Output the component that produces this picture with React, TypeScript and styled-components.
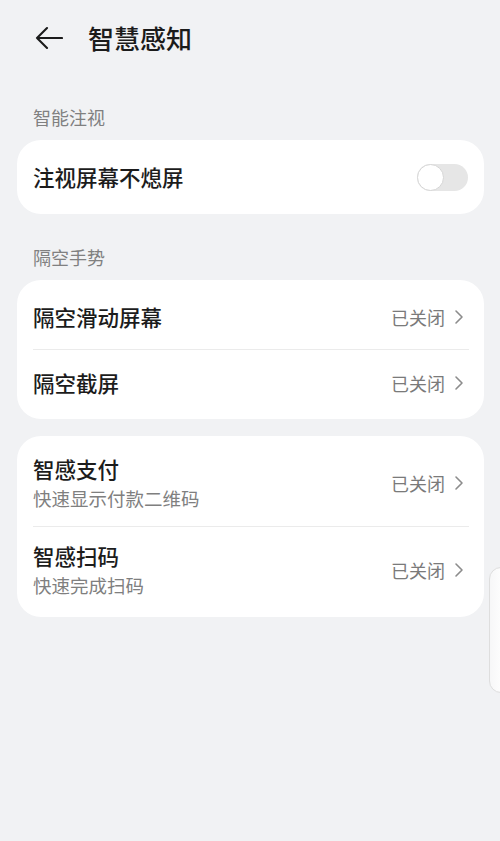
import React from "react"
import styled, { createGlobalStyle } from "styled-components"

const GlobalStyle = createGlobalStyle`
  html, body {
    margin: 0;
    padding: 0;
    background: #f1f2f4;
  }
  body {
    font-family: "Noto Sans CJK SC", "Noto Sans", sans-serif;
    -webkit-font-smoothing: antialiased;
  }
`

const Page = styled.div`
  position: relative;
  width: 500px;
  min-height: 841px;
  background: #f1f2f4;
  overflow: hidden;
`

const Header = styled.div`
  height: 76px;
  display: flex;
  align-items: center;
  padding-left: 35px;
  gap: 25px;
`

const BackButton = styled.button`
  width: 28px;
  height: 24px;
  padding: 0;
  border: none;
  background: none;
  display: flex;
  align-items: center;
  justify-content: center;
  color: #1b1b1b;
`

const PageTitle = styled.h1`
  margin: 0;
  font-size: 26px;
  line-height: 34px;
  font-weight: 500;
  color: #1b1b1b;
`

const SectionLabel = styled.div<{ $top: number }>`
  margin: ${(p) => p.$top}px 0 11px 33px;
  font-size: 18px;
  line-height: 24px;
  color: #808080;
`

const Card = styled.div<{ $gap?: number }>`
  margin: ${(p) => p.$gap ?? 0}px 16px 0 17px;
  background: #ffffff;
  border-radius: 24px;
  padding: 4px 0;
`

const Row = styled.div<{ $height: number }>`
  height: ${(p) => p.$height}px;
  display: flex;
  align-items: center;
  padding: 0 16px;
`

const Divider = styled.div`
  margin: 0 15px 0 16px;
  height: 1px;
  background: #ebebeb;
`

const TextBlock = styled.div`
  flex: 1;
  display: flex;
  flex-direction: column;
`

const RowTitle = styled.div`
  font-size: 21.5px;
  line-height: 30px;
  font-weight: 500;
  color: #1c1c1c;
`

const RowSub = styled.div`
  font-size: 18.5px;
  line-height: 28px;
  color: #7f7f7f;
`

const Status = styled.div`
  display: flex;
  align-items: center;
  gap: 9px;
  font-size: 18px;
  line-height: 24px;
  color: #7a7a7a;
  margin-right: 4px;
`

const Toggle = styled.div`
  width: 51px;
  height: 27px;
  border-radius: 14px;
  background: #e6e6e6;
  display: flex;
  align-items: center;
`

const Knob = styled.div`
  width: 25px;
  height: 25px;
  border-radius: 50%;
  background: #ffffff;
  border: 1px solid #d6d6d6;
`

const SideHandle = styled.div`
  position: absolute;
  right: -2px;
  top: 567px;
  width: 11px;
  height: 124px;
  border-radius: 12px 0 0 12px;
  border: 1px solid #dedede;
  background: linear-gradient(90deg, #f7f7f8, #fdfdfd);
`

const Chevron = () => (
  <svg width="10" height="16" viewBox="0 0 10 16">
    <path d="M2 2 L8 8 L2 14" fill="none" stroke="#8c8c8c" strokeWidth="1.6" strokeLinecap="round" strokeLinejoin="round" />
  </svg>
)

const ClosedStatus = () => (
  <Status>
    已关闭
    <Chevron />
  </Status>
)

const listA = ["隔空滑动屏幕", "隔空截屏"]
const listB = [
  { title: "智感支付", sub: "快速显示付款二维码" },
  { title: "智感扫码", sub: "快速完成扫码" },
]

export default function App() {
  return (
    <Page>
      <GlobalStyle />
      <Header>
        <BackButton>
          <svg width="28" height="24" viewBox="0 0 28 24">
            <path d="M12 2 L2 12 L12 22 M2 12 H27" fill="none" stroke="#1b1b1b" strokeWidth="2.1" strokeLinecap="round" strokeLinejoin="round" />
          </svg>
        </BackButton>
        <PageTitle>智慧感知</PageTitle>
      </Header>

      <SectionLabel $top={29}>智能注视</SectionLabel>
      <Card>
        <Row $height={66}>
          <TextBlock>
            <RowTitle>注视屏幕不熄屏</RowTitle>
          </TextBlock>
          <Toggle>
            <Knob />
          </Toggle>
        </Row>
      </Card>

      <SectionLabel $top={31}>隔空手势</SectionLabel>
      <Card>
        {listA.map((t, i) => (
          <React.Fragment key={t}>
            {i > 0 && <Divider />}
            <Row $height={65}>
              <TextBlock>
                <RowTitle>{t}</RowTitle>
              </TextBlock>
              <ClosedStatus />
            </Row>
          </React.Fragment>
        ))}
      </Card>

      <Card $gap={17}>
        {listB.map((it, i) => (
          <React.Fragment key={it.title}>
            {i > 0 && <Divider />}
            <Row $height={86}>
              <TextBlock>
                <RowTitle>{it.title}</RowTitle>
                <RowSub>{it.sub}</RowSub>
              </TextBlock>
              <ClosedStatus />
            </Row>
          </React.Fragment>
        ))}
      </Card>

      <SideHandle />
    </Page>
  )
}
